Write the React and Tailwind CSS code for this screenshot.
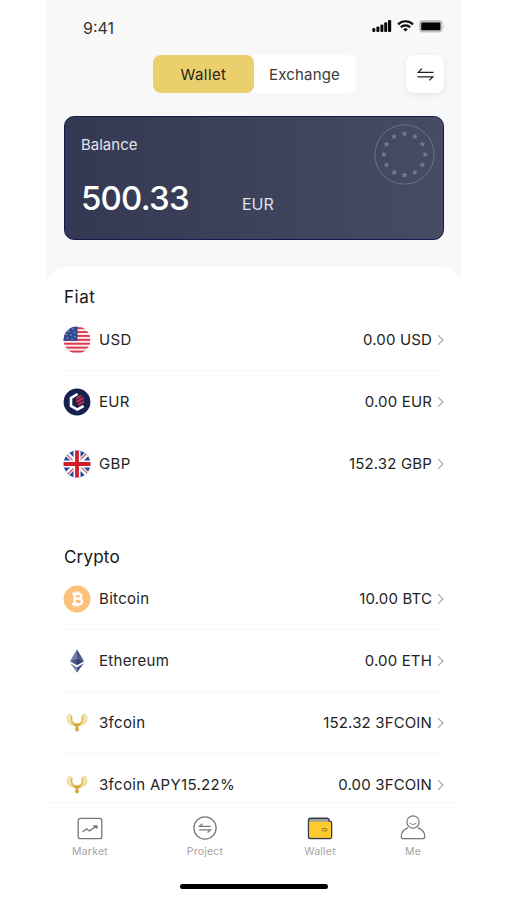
import React from "react";

function SignalIcon() {
  return (
    <svg width="20" height="12" viewBox="0 0 20 12" fill="#0b0b0b">
      <rect x="0.3" y="8" width="3" height="4" rx="1.2" />
      <rect x="4.4" y="6.4" width="3" height="5.6" rx="1.1" />
      <rect x="8.4" y="4.4" width="3" height="7.6" rx="1.1" />
      <rect x="12.2" y="2.2" width="3" height="9.8" rx="1.1" />
      <rect x="16" y="0" width="3.2" height="12" rx="1.1" />
    </svg>
  );
}

function WifiIcon() {
  return (
    <svg width="17" height="12" viewBox="0 0 17 12" fill="none" stroke="#0b0b0b" strokeWidth="2.2">
      <path d="M1 4.4C5.2 0.2 11.8 0.2 16 4.4" />
      <path d="M3.8 7.2C6.4 4.7 10.6 4.7 13.2 7.2" />
      <path d="M8.5 11.6L6.1 9.2C7.5 8 9.5 8 10.9 9.2Z" fill="#0b0b0b" stroke="none" />
    </svg>
  );
}

function BatteryIcon() {
  return (
    <svg width="26" height="13" viewBox="0 0 26 13">
      <rect x="0.7" y="0.7" width="22.2" height="11.2" rx="2" fill="#c4c4c4" stroke="#bdbdbd" />
      <rect x="2.2" y="2.4" width="19.2" height="7.8" rx="1" fill="#050505" />
      <path d="M24.3 4.4C25.6 4.8 25.6 7.8 24.3 8.2Z" fill="#c4c4c4" />
    </svg>
  );
}

function SwapIcon() {
  return (
    <svg width="17" height="15" viewBox="0 0 17 15" fill="none" stroke="#222" strokeWidth="1.3">
      <path d="M16.5 5.4H1.2L5 1.6" />
      <path d="M0.5 9.9H15.8L12.4 13.4" />
    </svg>
  );
}

function Stars() {
  const stars = Array.from({ length: 12 }, (_, i) => {
    const a = (i * Math.PI) / 6;
    return [30.5 + 20.7 * Math.sin(a), 30.5 - 20.7 * Math.cos(a)];
  });
  return (
    <svg width="61" height="61" viewBox="0 0 61 61">
      <circle cx="30.5" cy="30.5" r="29.6" fill="none" stroke="#6d7289" strokeWidth="1" />
      {stars.map(([x, y]) => (
        <path
          key={`${x}-${y}`}
          transform={`translate(${x} ${y})`}
          d="M0 -3.2L0.9 -1.1L3.1 -1L1.4 0.5L1.9 2.6L0 1.5L-1.9 2.6L-1.4 0.5L-3.1 -1L-0.9 -1.1Z"
          fill="#747a91"
        />
      ))}
    </svg>
  );
}

function UsdIcon() {
  return (
    <svg width="28" height="28" viewBox="0 0 28 28">
      <clipPath id="usd"><circle cx="14" cy="14" r="13.4" /></clipPath>
      <g clipPath="url(#usd)">
        <rect width="28" height="28" fill="#fbe9ec" />
        {[0, 1, 2, 3, 4, 5, 6].map((i) => (
          <rect key={i} y={1.2 + i * 3.9} width="28" height="1.9" fill="#dc3a4c" />
        ))}
        <rect width="14.5" height="14.8" fill="#2f4a8d" />
        {[[10, 3], [6, 5.5], [11.5, 6.5], [3.5, 8.5], [8, 9], [12, 10.5], [4.5, 12], [9, 13]].map(([x, y]) => (
          <circle key={`${x}-${y}`} cx={x} cy={y} r="0.7" fill="#a9b9dc" />
        ))}
      </g>
    </svg>
  );
}

function EurIcon() {
  return (
    <svg width="28" height="28" viewBox="0 0 28 28" fill="none">
      <circle cx="14" cy="14" r="13.4" fill="#17214f" />
      <path d="M14.6 6L8 9.9V17.9L14.3 21.6L20.6 18" stroke="#fff" strokeWidth="2.6" />
      <path d="M13.2 10.9L18.4 7.8M13.4 14.1L21 9.7M15 16.9L21.2 13.2" stroke="#d52f4e" strokeWidth="1.9" />
    </svg>
  );
}

function GbpIcon() {
  return (
    <svg width="28" height="28" viewBox="0 0 28 28" fill="none">
      <clipPath id="gbp"><circle cx="14" cy="14" r="13.4" /></clipPath>
      <g clipPath="url(#gbp)">
        <rect width="28" height="28" fill="#2449a0" />
        <path d="M2 2L26 26M26 2L2 26" stroke="#fff" strokeWidth="4.6" />
        <path d="M3 3.9L12 12.9M25 24.1L16 15.1M24.1 3L15 12M3.9 25L13 16" stroke="#dd4a55" strokeWidth="1.3" />
        <path d="M14 0V28M0 14H28" stroke="#fff" strokeWidth="7" />
        <path d="M14 0V28M0 14H28" stroke="#d01f2b" strokeWidth="3.8" />
      </g>
    </svg>
  );
}

function BtcIcon() {
  return (
    <svg width="28" height="28" viewBox="0 0 28 28" fill="none">
      <circle cx="14" cy="14" r="13.4" fill="#fdc17c" />
      <path
        d="M9.3 9H15.2C19.4 9 19.3 13.7 15.4 13.7C20.5 13.7 20.2 19.2 15.4 19.2H8.9M11.6 9V19.2M11.6 13.7H15.4M12.3 6.5V9M15.4 6.5V9M12 19.2V21.6M15 19.2V21.6"
        stroke="#fff"
        strokeWidth="2.3"
      />
    </svg>
  );
}

function EthIcon() {
  return (
    <svg width="28" height="28" viewBox="0 0 28 28">
      <path d="M14 2.2L7 14.3L14 11.2Z" fill="#7079a6" />
      <path d="M14 2.2L21 14.3L14 11.2Z" fill="#4a5389" />
      <path d="M14 11.2L7 14.3L14 18.3Z" fill="#48518a" />
      <path d="M14 11.2L21 14.3L14 18.3Z" fill="#333c73" />
      <path d="M7.2 16.3L14 20.3V25.8Z" fill="#8088b2" />
      <path d="M20.8 16.3L14 20.3V25.8Z" fill="#4a5389" />
    </svg>
  );
}

function WingsIcon() {
  return (
    <svg width="28" height="28" viewBox="0 0 28 28" fill="none">
      <path d="M7.4 5.4C2.6 8.8 5 15.4 12.6 15.8" stroke="#ecd592" strokeWidth="2.8" strokeDasharray="1.7 0.4" />
      <path d="M20.6 5.4C25.4 8.8 23 15.4 15.4 15.8" stroke="#ecd592" strokeWidth="2.8" strokeDasharray="1.7 0.4" />
      <path d="M9.1 6.8C6.7 10.4 9 14.3 14 15.6C19 14.3 21.3 10.4 18.9 6.8" stroke="#deb853" strokeWidth="1.7" />
      <path d="M9.4 15.5L14 14.6L18.6 15.5L15.1 17.7L16.2 20.9L14 22.7L11.8 20.9L12.9 17.7Z" fill="#d6a93c" />
    </svg>
  );
}

function Row({ icon, name, value, line }) {
  return (
    <div className={`flex h-[62px] shrink-0 items-center border-b ${line ? "border-[#f7f7f8]" : "border-transparent"}`}>
      <div className="-ml-px w-9">{icon}</div>
      <span className="grow pt-0.5 text-[15px] tracking-[0.32px]">{name}</span>
      <span className="pt-0.5 text-[15px] tracking-[0.15px]">{value}</span>
      <svg className="ml-[5px]" width="7" height="12" viewBox="0 0 7 12" fill="none" stroke="#a2a2a2" strokeWidth="1.1">
        <path d="M1 1.2L6 6L1 10.8" />
      </svg>
    </div>
  );
}

function MarketIcon() {
  return (
    <svg width="26" height="26" viewBox="0 0 26 26" fill="none" stroke="#777" strokeWidth="1.3">
      <rect x="1.2" y="3.4" width="23.6" height="20.2" rx="2.2" />
      <path d="M5.5 16.9L9.6 13.8L12.3 15.9L19.5 11.2M16.2 11H20V13.8" />
    </svg>
  );
}

function ProjectIcon() {
  return (
    <svg width="26" height="26" viewBox="0 0 26 26" fill="none" stroke="#777" strokeWidth="1.3">
      <circle cx="13" cy="13" r="11.1" />
      <path d="M18.8 11.3H7.5L10.5 8.7M7.2 14.9H18.5L15.5 17.5" />
    </svg>
  );
}

function WalletIcon() {
  return (
    <svg width="26" height="26" viewBox="0 0 26 26" fill="none" stroke="#3b3c42" strokeWidth="1.4">
      <path d="M1.5 6.2V21.5Q1.5 23.5 3.5 23.5H22.6Q24.6 23.5 24.6 21.5V8.3Q24.6 6.3 22.6 6.3H22V5.2Q22 3.2 20 3.2H3.8Q1.5 3.2 1.5 5.2Z" fill="#a3a3a0" />
      <path d="M2.2 6.7H22.4Q24 6.7 24 8.5V22.7H3.8Q2.2 22.7 2.2 21Z" fill="#fdca2f" stroke="none" />
      <rect x="15.3" y="13.5" width="4.6" height="2.4" rx="0.8" stroke="#8c6f24" strokeWidth="0.9" />
    </svg>
  );
}

function MeIcon() {
  return (
    <svg width="26" height="26" viewBox="0 0 26 26" fill="none" stroke="#777" strokeWidth="1.2">
      <circle cx="13" cy="7" r="6.1" />
      <path d="M9.6 8.2Q13 11 16.4 8.2" strokeWidth="0.9" />
      <path d="M8.2 12.6C3.5 14.5 1.2 18 1.2 21.4Q1.2 23.6 3.4 23.6H22.6Q24.8 23.6 24.8 21.4C24.8 18 22.5 14.5 17.8 12.6" />
    </svg>
  );
}

function Tab({ icon, label, className }) {
  return (
    <div className={`flex flex-col items-center ${className}`}>
      {icon}
      <span className="mt-1 text-[10.5px] leading-[14px] tracking-[0.2px] text-[#a3a3a3]">{label}</span>
    </div>
  );
}

export default function App() {
  return (
    <div className="h-[900px] w-[506px] overflow-hidden bg-white pl-[46px] font-['Inter','Liberation_Sans',sans-serif] text-[#242424]">
      <div className="flex h-full w-[415px] flex-col bg-[#f8f8f8]">
        <header className="flex h-[55px] shrink-0 items-start justify-between pr-4 pl-[37px]">
          <span className="mt-[18px] text-[16px] leading-5 text-[#333]">9:41</span>
          <div className="mt-5 flex gap-[5px]">
            <SignalIcon />
            <WifiIcon />
            <BatteryIcon />
          </div>
        </header>

        <div className="flex h-[38px] shrink-0 justify-between pr-[17px] pl-[107px]">
          <div className="flex w-[203px] rounded-lg bg-white text-[15px] leading-[39px]">
            <div className="w-[101px] rounded-lg bg-[#ebcf6c] text-center tracking-[0.4px]">Wallet</div>
            <div className="w-[101px] text-center tracking-[0.2px] text-[#3b3b3b]">Exchange</div>
          </div>
          <div className="flex w-[38px] items-center justify-center rounded-lg bg-white shadow-[0_2px_6px_rgba(0,0,0,0.07)]">
            <SwapIcon />
          </div>
        </div>

        <section className="mx-[18px] mt-[23px] flex h-[124px] w-[380px] shrink-0 justify-between rounded-[10px] border border-[#131b4b] bg-linear-to-r from-[#343852] to-[#464c64] pr-2 pl-4 text-white">
          <div>
            <div className="mt-[18px] text-[15px] leading-5 text-[#e2e4ec]">Balance</div>
            <div className="mt-5 flex items-baseline">
              <span className="w-[161px] text-[33px] leading-[46px] font-medium tracking-[-0.8px]">500.33</span>
              <span className="text-[16px] text-[#dfe1ea]">EUR</span>
            </div>
          </div>
          <div className="mt-[7px]"><Stars /></div>
        </section>

        <main className="mt-[27px] flex min-h-0 grow flex-col overflow-hidden rounded-t-[20px] bg-white pr-[17px] pl-[18px]">
          <h2 className="mt-[18px] h-6 shrink-0 text-[17px] leading-6 tracking-[0.5px] text-[#161616]">Fiat</h2>
          <Row icon={<UsdIcon />} name="USD" value="0.00 USD" line />
          <Row icon={<EurIcon />} name="EUR" value="0.00 EUR" />
          <Row icon={<GbpIcon />} name="GBP" value="152.32 GBP" />
          <h2 className="mt-[49px] h-6 shrink-0 pt-px text-[17px] leading-6 tracking-[0.2px] text-[#161616]">Crypto</h2>
          <Row icon={<BtcIcon />} name="Bitcoin" value="10.00 BTC" line />
          <Row icon={<EthIcon />} name="Ethereum" value="0.00 ETH" line />
          <Row icon={<WingsIcon />} name="3fcoin" value="152.32 3FCOIN" line />
          <Row icon={<WingsIcon />} name="3fcoin APY15.22%" value="0.00 3FCOIN" />
        </main>

        <nav className="flex h-[98px] shrink-0 flex-col border-t border-[#f7f7f7] bg-white">
          <div className="flex pt-3">
            <Tab className="ml-[14px] w-[60px]" icon={<MarketIcon />} label="Market" />
            <Tab className="ml-[55px] w-[60px]" icon={<ProjectIcon />} label="Project" />
            <Tab className="ml-[55px] w-[60px]" icon={<WalletIcon />} label="Wallet" />
            <Tab className="ml-[33px] w-[60px]" icon={<MeIcon />} label="Me" />
          </div>
          <div className="mt-[25px] ml-[134px] h-[5px] w-[148px] rounded-full bg-black" />
        </nav>
      </div>
    </div>
  );
}
